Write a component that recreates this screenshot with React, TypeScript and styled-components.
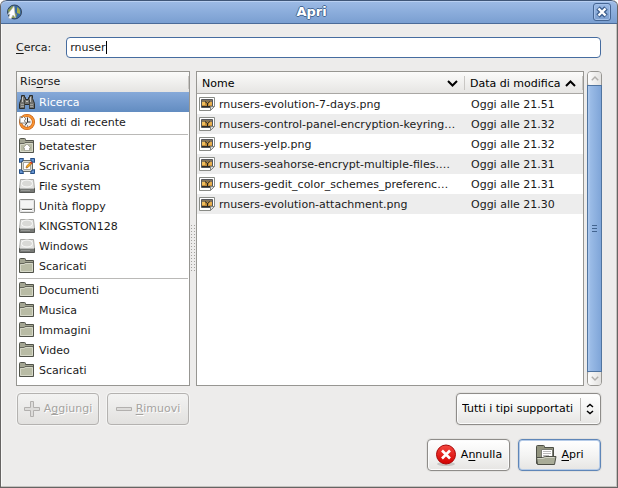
import React, { useState } from "react";
import styled, { createGlobalStyle } from "styled-components";

const GlobalStyle = createGlobalStyle`
  *, *::before, *::after { box-sizing: border-box; }
  body { margin: 0; background: #fff; }
  body, button, input, select, table {
    font-family: "DejaVu Sans", sans-serif;
    font-size: 11px;
    line-height: 14px;
    color: #1a1a1a;
  }
  u { text-underline-offset: 2px; }
  svg { flex: none; }
`;

const Dialog = styled.main`
  display: flex;
  flex-direction: column;
  min-height: 100vh;
  background: #edeceb;
  border: 1px solid #666463;
  border-top: 0;
  border-radius: 6px 6px 0 0;
  box-shadow: inset -1px -1px 0 #c4c2bf, inset 1px 0 0 #f8f8f7;
  overflow: hidden;
`;

const TitleBar = styled.header`
  display: grid;
  grid-template-columns: 24px 1fr 24px;
  align-items: center;
  height: 24px;
  padding: 0 0 0 5px;
  border-top: 1px solid #3f5678;
  border-bottom: 1px solid #4b6b98;
  border-radius: 6px 6px 0 0;
  background: linear-gradient(#9dbbe6, #7a9fd1);
  box-shadow: inset 0 1px 0 #b9d0f2;
`;

const Title = styled.h1`
  margin: 0;
  text-align: center;
  font-size: 13px;
  line-height: 20px;
  font-weight: bold;
  color: #fff;
  text-shadow: 1px 0 #466794, -1px 0 #466794, 0 1px #466794, 0 -1px #466794;
`;

const CloseButton = styled.button`
  display: grid;
  place-items: center;
  width: 18px;
  height: 18px;
  padding: 0;
  border: 1px solid #456593;
  border-radius: 3px;
  background: linear-gradient(#9ab9e5, #7c9fcf);
  box-shadow: inset 0 0 0 1px #a5c1e9;
`;

const Body = styled.div`
  display: flex;
  flex: 1;
  flex-direction: column;
  padding: 13px 16px 16px 15px;
`;

const SearchRow = styled.div`
  display: flex;
  align-items: center;
  gap: 15px;
  margin-bottom: 13px;
`;

const SearchField = styled.div`
  display: flex;
  flex: 1;
  align-items: center;
  height: 21px;
  padding: 0 3px;
  border: 1px solid #466c9f;
  border-radius: 4px;
  background: #fff;
`;

const SearchInput = styled.input`
  field-sizing: content;
  padding: 0;
  border: 0;
  outline: 0;
  background: transparent;
  caret-color: transparent;
`;

const Caret = styled.span`
  width: 1px;
  height: 13px;
  background: #000;
`;

const Panes = styled.div`
  display: grid;
  grid-template-columns: 174px 6px minmax(0, 1fr) 15px;
  flex: 1;
  margin-right: -1px;
`;

const Sidebar = styled.nav`
  border: 1px solid #979692;
  background: #fff;
`;

const SidebarHeader = styled.h2`
  height: 20px;
  margin: 0;
  padding: 3px;
  background: linear-gradient(#c9c7c4, #c9c7c4) no-repeat 100% 50% / 1px 13px,
    linear-gradient(#fbfbfa, #e5e4e2);
  font-size: 11px;
  line-height: 14px;
  font-weight: normal;
`;

const PlaceGroup = styled.div`
  & + & {
    padding-top: 4px;
    background: linear-gradient(#bab9b7, #bab9b7) no-repeat 50% 2px / calc(100% - 2px) 1px;
  }
`;

const Place = styled.button<{ $selected: boolean }>`
  display: flex;
  align-items: center;
  gap: 4px;
  width: 100%;
  height: 20px;
  padding: 0 2px;
  border: 0;
  text-align: left;
  color: ${(p) => (p.$selected ? "#fff" : "#1a1a1a")};
  background: ${(p) => (p.$selected ? "linear-gradient(#86a9d9, #628cc1)" : "transparent")};
`;

const Label = styled.span`
  padding-top: 2px;
`;

const Splitter = styled.div`
  align-self: center;
  justify-self: center;
  width: 6px;
  height: 48px;
  margin-top: 40px;
  background: conic-gradient(from 0deg at 1px 1px, transparent 75%, #a3a19e 0) 1px 0 / 3px 3px;
`;

const FilePane = styled.section`
  margin-right: 3px;
  border: 1px solid #979692;
  background: #fff;
`;

const FileTable = styled.table`
  width: 100%;
  table-layout: fixed;
  border-collapse: collapse;
`;

const HeaderCell = styled.th<{ $width?: number }>`
  width: ${(p) => (p.$width ? `${p.$width}px` : "auto")};
  height: 22px;
  padding: 0;
  font-weight: normal;
  background: linear-gradient(#c9c7c4, #c9c7c4) no-repeat 100% 50% / 1px 14px,
    linear-gradient(#fbfbfa, #e5e4e2);
  box-shadow: inset 0 -1px 0 #a9a7a4;
`;

const SortButton = styled.button`
  display: flex;
  align-items: center;
  justify-content: space-between;
  width: 100%;
  padding: 0 7px 0 5px;
  border: 0;
  background: transparent;
  white-space: nowrap;
  color: #000;
`;

const FileRow = styled.tr`
  height: 20px;
  &:nth-child(even) { background: #ededed; }
`;

const FileCell = styled.td`
  padding: 0 0 0 2px;
  white-space: nowrap;
`;

const DateCell = styled.td`
  padding: 2px 0 0 6px;
  white-space: nowrap;
`;

const FileName = styled.div`
  display: flex;
  align-items: center;
  gap: 4px;
`;

const ScrollBar = styled.div`
  display: flex;
  flex-direction: column;
  border: 1px solid #979692;
  border-radius: 4px;
  background: #e5e4e2;
`;

const ScrollButton = styled.button`
  display: grid;
  place-items: center;
  height: 13px;
  padding: 0;
  border: 0;
  border-radius: 3px;
  background: linear-gradient(90deg, #fcfcfc, #e3e2e0);
`;

const ScrollThumb = styled.div`
  display: grid;
  place-items: center;
  flex: 1;
  margin: 0 -1px;
  border: 1px solid #50749f;
  background: linear-gradient(90deg, #b0cbef, #9abbe6 20%, #7fa5d8);
`;

const Actions = styled.div`
  display: flex;
  align-items: center;
  gap: 8px;
  height: 32px;
  margin-top: 7px;
  padding-left: 1px;

  & + & { margin-top: 14px; }
`;

const Spacer = styled.span`
  flex: 1;
`;

const Button = styled.button<{ $default?: boolean }>`
  display: flex;
  align-items: center;
  justify-content: center;
  gap: 4px;
  min-width: 83px;
  height: 32px;
  padding: 0 4px;
  border: 1px solid ${(p) => (p.$default ? "#5f86b8" : "#8e8c89")};
  border-radius: 4px;
  background: linear-gradient(#fff, #f4f4f3 50%, #e6e5e3);
  box-shadow: ${(p) => (p.$default ? "inset 0 0 0 1px #b5cbe8" : "inset 0 0 0 1px #fbfbfb")}, 0 0 0 1px #e2e1df;
  color: #000;

  &:disabled {
    min-width: 82px;
    border-color: #b4b2b0;
    background: linear-gradient(#f3f3f2, #e2e1df);
    box-shadow: 0 0 0 1px #f5f5f4;
    color: #a5a3a0;
    text-shadow: 1px 1px #fff;
  }
`;

const FilterBox = styled.div`
  display: grid;
  align-items: center;
  > * { grid-area: 1 / 1; }
  > svg { justify-self: end; margin-right: 7px; pointer-events: none; }
`;

const FilterSelect = styled.select`
  appearance: none;
  width: 145px;
  height: 32px;
  padding: 0 20px 0 5px;
  border: 1px solid #8e8c89;
  border-radius: 4px;
  background: linear-gradient(#bbb9b6, #bbb9b6) no-repeat calc(100% - 19px) 50% / 1px 23px,
    linear-gradient(#fff, #f4f4f3 50%, #e6e5e3);
  box-shadow: inset 0 0 0 1px #fbfbfb, 0 0 0 1px #e2e1df;
  color: #000;
`;

type IconName = "search" | "recent" | "home" | "desktop" | "drive" | "floppy" | "folder";

const Svg = ({ children }: { children: React.ReactNode }) => (
  <svg width="16" height="16" viewBox="0 0 16 16" aria-hidden="true">
    {children}
  </svg>
);

const FolderShape = () => (
  <>
    <path d="M.5 1.5q0-1 1-1h4q1 0 1 1v1h8v12H.5z" fill="#a3a592" stroke="#51534a" />
    <path d="M1.5 13.5v-7h4l1-1h7v8z" fill="#b9bca5" stroke="#d6d8c8" />
    <path d="M1 5.5h4l1-1h8" fill="none" stroke="#65675c" />
  </>
);

const PlaceIcon = ({ name }: { name: IconName }) => {
  switch (name) {
    case "search":
      return (
        <Svg>
          <path d="M2.5 1.5h3v2h1v2h3v-2h1v-2h3v3l2 5v5h-5v-4h-5v4h-5v-5l2-5z" fill="#73736f" stroke="#2b2c2a" />
          <path d="M3.5 3v5M11.5 3v5M7 7.5h2" stroke="#c4c4c0" />
          <path d="M2 10.5h3M2 12.5h3M11 10.5h3M11 12.5h3" stroke="#a2a39f" />
          <path d="M5.5 6v8M10.5 6v8" stroke="#434442" />
        </Svg>
      );
    case "recent":
      return (
        <Svg>
          <circle cx="8" cy="8" r="6.5" fill="#f1f0ee" stroke="#c4590a" strokeWidth="3" />
          <circle cx="8" cy="8" r="6.5" fill="none" stroke="#f79433" strokeWidth="1.8" />
          <path d="M1 2.5v6.5h6.500L5 6.800 7 5 4.500 2.500 3 4z" fill="#fff" stroke="#76716a" strokeWidth=".8" />
          <path d="M8.500 3.500v4.500h3M8.500 8 6 11.500M8.500 11.500v1" fill="none" stroke="#343536" />
        </Svg>
      );
    case "home":
      return (
        <Svg>
          <FolderShape />
          <path d="M8 6l4 4h-1.500v2.500h-5V10H4z" fill="#fff" stroke="#8b8d7e" strokeWidth=".6" />
        </Svg>
      );
    case "desktop":
      return (
        <Svg>
          <path d="M2.5 2.5h11v11h-11z" fill="#d8dad2" stroke="#686b65" />
          <path d="M.5.5h4l-1 3-3 1zM15.500.5h-4l1 3 3 1zM.5 15.500v-4l3 1 1 3zM15.500 15.500v-4l-3 1-1 3z" fill="#6593cf" stroke="#254f87" />
          <path d="M4.500 4.500h7v7h-7z" fill="#fff" stroke="#a3a5a0" />
          <path d="m7 10 .5-2L11.500 4 13 5.500 9 9.500z" fill="#f6a91c" stroke="#8e4b0b" strokeWidth=".6" />
          <path d="m11.500 4 1.500 1.500" stroke="#cf2d24" strokeWidth="1.5" />
        </Svg>
      );
    case "drive":
      return (
        <Svg>
          <path d="M1.500 1.500h13l1 9h-15z" fill="#e4e4e2" stroke="#a9a9a6" />
          <ellipse cx="8" cy="5.500" rx="5.500" ry="3.500" fill="#d9d9d6" stroke="#fafaf9" />
          <path d="M.5 10.500h15v4H.5z" fill="#777976" stroke="#555754" />
          <path d="M1 10.500h14" stroke="#b9bab8" />
          <path d="M2 12.500h9" stroke="#969895" />
        </Svg>
      );
    case "floppy":
      return (
        <Svg>
          <rect x=".5" y="1.500" width="15" height="13" rx="1" fill="#e4e4e4" stroke="#8a8b88" />
          <path d="M2 3h12v7H2z" fill="#f4f4f4" />
          <path d="M1 10.500h14" stroke="#cfcfcd" />
          <path d="M3 11.500h10" stroke="#5b5c5a" />
          <path d="M3 12.500h10" stroke="#fff" />
        </Svg>
      );
    default:
      return (
        <Svg>
          <FolderShape />
        </Svg>
      );
  }
};

const ImageIcon = () => (
  <Svg>
    <path d="M.5 1.500h15v9l-4 4H.5z" fill="#fff" stroke="#898b86" />
    <path d="M2.500 3.500h11v8h-11z" fill="#c08c3c" stroke="#55565a" />
    <path d="M3 4h10v2H3z" fill="#83735a" />
    <path d="M3 6h3v3H3z" fill="#f0bd5c" />
    <path d="M10 6h3v3h-3z" fill="#e8b04e" />
    <path d="M3 10h10v1H3z" fill="#2e2b27" />
    <path d="m6 5.500 2.500 2 2.500-2M8.500 7v3" fill="none" stroke="#2b2822" />
    <path d="M15.500 10.500h-4v4z" fill="#dddedb" stroke="#858783" />
  </Svg>
);

const AppIcon = () => (
  <Svg>
    <circle cx="8.500" cy="8" r="7" fill="#3769a6" stroke="#34465c" />
    <path d="M6 2q4 1 3 4t2 4l-1 4H4L2 6z" fill="#8b9d48" />
    <path d="M11 3q4 2 3 7l-3-1z" fill="#a5ad4c" />
    <path d="M8 2 1.500 10.500l2.500-.5-1.500 4 2.500 1 2-4 2.500 3z" fill="#fff" stroke="#acb1b7" strokeWidth=".6" />
  </Svg>
);

const Chevron = ({ up, width, color }: { up?: boolean; width: number; color: string }) => (
  <svg width={width} height={width === 11 ? 7 : 5} viewBox="0 0 11 7" fill="none" stroke={color} strokeWidth="2" aria-hidden="true">
    <path d={up ? "M1 6 5.500 1.500 10 6" : "M1 1 5.500 5.500 10 1"} />
  </svg>
);

const StopIcon = () => (
  <svg width="22" height="22" viewBox="0 0 22 22" aria-hidden="true">
    <defs>
      <linearGradient id="stop" x2="0" y2="1">
        <stop stopColor="#f4473f" />
        <stop offset="1" stopColor="#d40000" />
      </linearGradient>
    </defs>
    <ellipse cx="11" cy="20" rx="9" ry="2" fill="#c9c7c5" />
    <circle cx="11" cy="10.500" r="9.500" fill="url(#stop)" stroke="#a90808" />
    <path d="m7 6.500 8 8m0-8-8 8" stroke="#fff" strokeWidth="2.600" />
  </svg>
);

const OpenIcon = () => (
  <svg width="22" height="22" viewBox="0 0 22 22" aria-hidden="true">
    <path d="M1.500 19.500v-17q0-1 1-1h6q1 0 1 1v1h9v16z" fill="#92947f" stroke="#4d4f46" />
    <path d="M6.500 5.500h11v9h-11z" fill="#fff" stroke="#7d7f76" />
    <path d="M8 7.500h8M8 9.500h8M8 11.500h6" stroke="#bababa" />
    <path d="M1.500 13.500h6l3-1h10.500l-1.500 8h-17z" fill="#a9ac98" stroke="#4d4f46" />
    <path d="M2.500 14.500h5.500l2.500-1h9" fill="none" stroke="#d4d6c8" />
  </svg>
);

const PlusIcon = () => (
  <Svg>
    <path d="M6.500.5h3v6h6v3h-6v6h-3v-6h-6v-3h6z" fill="#dddcda" stroke="#b2b0ae" />
  </Svg>
);

const MinusIcon = () => (
  <Svg>
    <path d="M.5 6.500h15v3H.5z" fill="#dddcda" stroke="#b2b0ae" />
  </Svg>
);

const groups: { id: string; label: string; icon: IconName }[][] = [
  [
    { id: "search", label: "Ricerca", icon: "search" },
    { id: "recent", label: "Usati di recente", icon: "recent" },
  ],
  [
    { id: "home", label: "betatester", icon: "home" },
    { id: "desktop", label: "Scrivania", icon: "desktop" },
    { id: "root", label: "File system", icon: "drive" },
    { id: "floppy", label: "Unità floppy", icon: "floppy" },
    { id: "usb", label: "KINGSTON128", icon: "drive" },
    { id: "windows", label: "Windows", icon: "drive" },
    { id: "downloads", label: "Scaricati", icon: "folder" },
  ],
  [
    { id: "documents", label: "Documenti", icon: "folder" },
    { id: "music", label: "Musica", icon: "folder" },
    { id: "pictures", label: "Immagini", icon: "folder" },
    { id: "video", label: "Video", icon: "folder" },
    { id: "downloads-bookmark", label: "Scaricati", icon: "folder" },
  ],
];

const files = [
  ["rnusers-evolution-7-days.png", "Oggi alle 21.51"],
  ["rnusers-control-panel-encryption-keyring…", "Oggi alle 21.32"],
  ["rnusers-yelp.png", "Oggi alle 21.32"],
  ["rnusers-seahorse-encrypt-multiple-files.…", "Oggi alle 21.31"],
  ["rnusers-gedit_color_schemes_preferenc…", "Oggi alle 21.31"],
  ["rnusers-evolution-attachment.png", "Oggi alle 21.30"],
];

export default function App() {
  const [query, setQuery] = useState("rnuser");
  const [selected, setSelected] = useState("search");

  return (
    <>
      <GlobalStyle />
      <Dialog>
        <TitleBar>
          <AppIcon />
          <Title>Apri</Title>
          <CloseButton aria-label="Chiudi">
            <svg width="12" height="12" viewBox="0 0 12 12" aria-hidden="true">
              <path d="m2 2 8 8m0-8-8 8" stroke="#3f608f" strokeWidth="5" />
              <path d="m2.500 2.500 7 7m0-7-7 7" stroke="#fff" strokeWidth="2.400" />
            </svg>
          </CloseButton>
        </TitleBar>
        <Body>
          <SearchRow>
            <label htmlFor="query"><u>C</u>erca:</label>
            <SearchField>
              <SearchInput id="query" value={query} onChange={(e) => setQuery(e.target.value)} />
              <Caret />
            </SearchField>
          </SearchRow>
          <Panes>
            <Sidebar>
              <SidebarHeader>Ris<u>o</u>rse</SidebarHeader>
              {groups.map((group) => (
                <PlaceGroup key={group[0].id}>
                  {group.map((place) => (
                    <Place key={place.id} $selected={place.id === selected} onClick={() => setSelected(place.id)}>
                      <PlaceIcon name={place.icon} />
                      <Label>{place.label}</Label>
                    </Place>
                  ))}
                </PlaceGroup>
              ))}
            </Sidebar>
            <Splitter />
            <FilePane>
              <FileTable>
                <thead>
                  <tr>
                    <HeaderCell>
                      <SortButton><Label>Nome</Label><Chevron width={11} color="#000" /></SortButton>
                    </HeaderCell>
                    <HeaderCell $width={118}>
                      <SortButton><Label>Data di modifica</Label><Chevron up width={11} color="#000" /></SortButton>
                    </HeaderCell>
                  </tr>
                </thead>
                <tbody>
                  {files.map(([name, date]) => (
                    <FileRow key={name}>
                      <FileCell>
                        <FileName><ImageIcon /><Label>{name}</Label></FileName>
                      </FileCell>
                      <DateCell>{date}</DateCell>
                    </FileRow>
                  ))}
                </tbody>
              </FileTable>
            </FilePane>
            <ScrollBar>
              <ScrollButton aria-label="Scorri su"><Chevron up width={8} color="#b0aeab" /></ScrollButton>
              <ScrollThumb>
                <svg width="5" height="7" viewBox="0 0 5 7" aria-hidden="true">
                  <path d="M0 .5h5M0 3.500h5M0 6.500h5" stroke="#42648f" />
                </svg>
              </ScrollThumb>
              <ScrollButton aria-label="Scorri giù"><Chevron width={8} color="#b0aeab" /></ScrollButton>
            </ScrollBar>
          </Panes>
          <Actions>
            <Button disabled><PlusIcon /><span>A<u>g</u>giungi</span></Button>
            <Button disabled><MinusIcon /><span><u>R</u>imuovi</span></Button>
            <Spacer />
            <FilterBox>
              <FilterSelect aria-label="Tipo di file">
                <option>Tutti i tipi supportati</option>
              </FilterSelect>
              <svg width="8" height="12" viewBox="0 0 8 12" fill="none" stroke="#000" strokeWidth="1.500" aria-hidden="true">
                <path d="M1 4 4 1.500 7 4M1 8l3 2.500L7 8" />
              </svg>
            </FilterBox>
          </Actions>
          <Actions>
            <Spacer />
            <Button><StopIcon /><span>A<u>n</u>nulla</span></Button>
            <Button $default><OpenIcon /><span><u>A</u>pri</span></Button>
          </Actions>
        </Body>
      </Dialog>
    </>
  );
}
